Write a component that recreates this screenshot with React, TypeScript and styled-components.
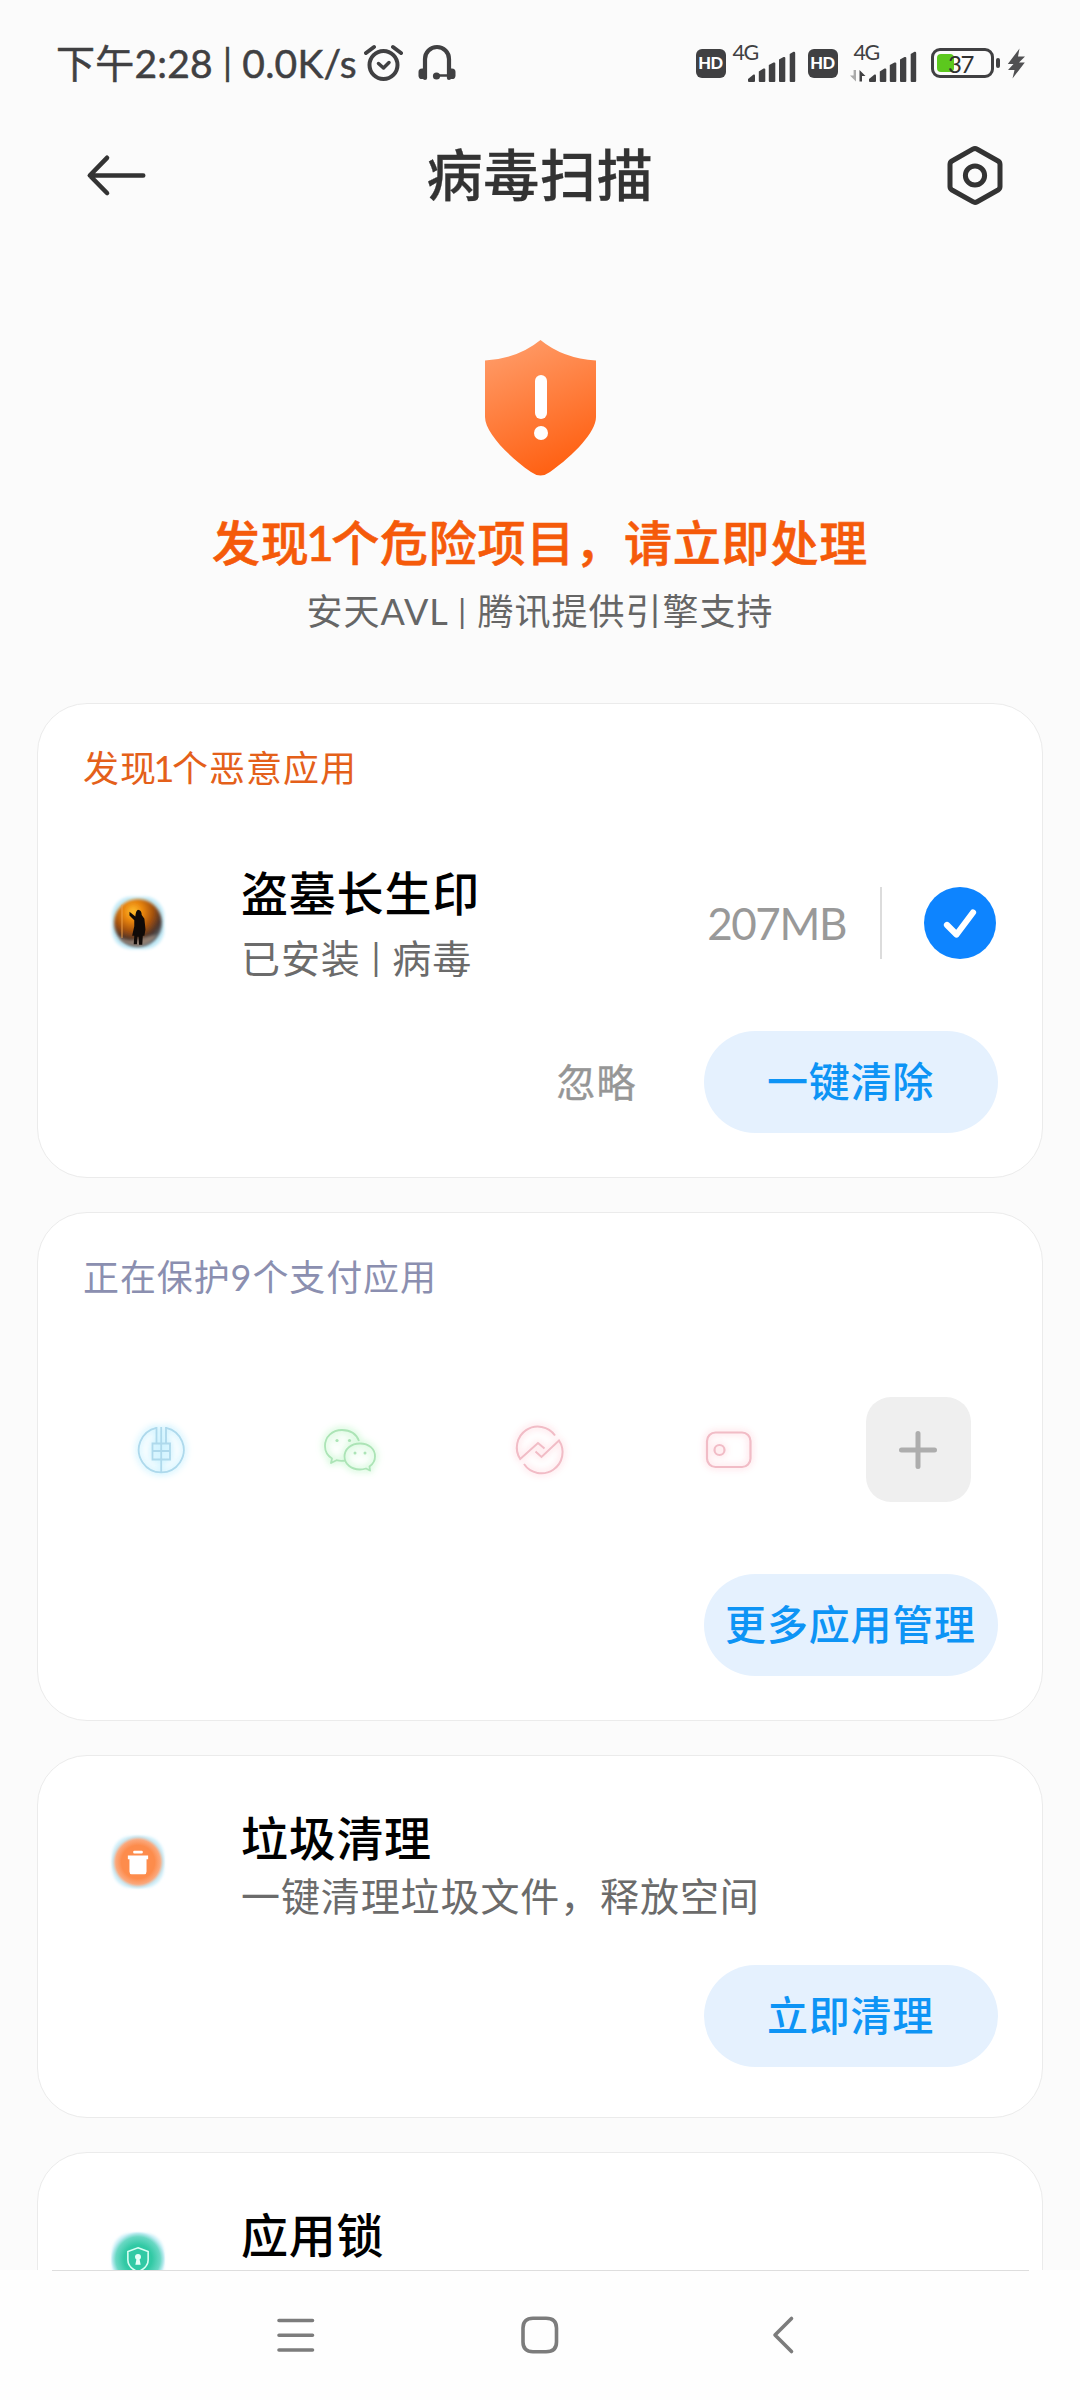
import React from "react";
import styled, { createGlobalStyle } from "styled-components";

const GlobalStyle = createGlobalStyle`
  * { box-sizing: border-box; }
  body { margin: 0; background: #fbfbfb; }
`;

const Screen = styled.div`
  width: 1080px;
  height: 2400px;
  overflow: hidden;
  display: flex;
  flex-direction: column;
  background: #fbfbfb;
  color: #000;
  font-family: Lato, "Noto Sans CJK SC", sans-serif;
`;

const Text = styled.div<{
  $size: number;
  $line: number;
  $color?: string;
  $weight?: number;
  $track?: number;
  $stroke?: number;
}>`
  font-size: ${(p) => p.$size}px;
  line-height: ${(p) => p.$line}px;
  color: ${(p) => p.$color ?? "#000"};
  font-weight: ${(p) => p.$weight ?? 400};
  letter-spacing: ${(p) => p.$track ?? 0}px;
  -webkit-text-stroke: ${(p) => p.$stroke ?? 0}px currentColor;
  white-space: nowrap;
`;

const One = styled.span`
  margin: 0 -3.5px;
`;

/* separator bar, raised to the height of the ideographs */
const Bar = styled.span`
  font-size: 0.92em;
  line-height: 1;
  vertical-align: 0.07em;
`;

/* ---------- status bar ---------- */

const StatusBar = styled.div`
  height: 96px;
  flex: none;
  padding: 30px 54px 0 56px;
  display: flex;
  justify-content: space-between;
  align-items: flex-start;
`;

const StatusGroup = styled.div`
  display: flex;
  align-items: center;
  height: 66px;
`;

const StatusIcons = styled.div<{ $left: number }>`
  display: flex;
  margin-left: ${(p) => p.$left}px;
`;

const HdBadge = styled.div`
  width: 30px;
  height: 29px;
  border-radius: 6px;
  background: #404042;
  color: #fff;
  font-size: 16.5px;
  line-height: 29px;
  font-weight: 900;
  letter-spacing: -0.5px;
  text-align: center;
`;

const Signal = styled.div<{ $width: number; $left: number }>`
  width: ${(p) => p.$width}px;
  margin-left: ${(p) => p.$left}px;
  height: 40px;
  position: relative;
  display: flex;
  justify-content: flex-end;
  align-items: flex-end;
`;

const NetLabel = styled.span<{ $left: number }>`
  position: absolute;
  left: ${(p) => p.$left}px;
  top: -2px;
  font-size: 21.5px;
  line-height: 22px;
  letter-spacing: -1.4px;
  color: #404042;
`;

const Battery = styled.div`
  width: 63px;
  height: 30px;
  margin-left: 14px;
  border: 3px solid #404042;
  border-radius: 9px;
  padding: 3px;
  position: relative;
`;

const BatteryFill = styled.div`
  width: 17px;
  height: 18px;
  border-radius: 4px;
  background: #5cc81e;
`;

const BatteryText = styled.span`
  position: absolute;
  inset: 0;
  text-align: center;
  font-size: 24px;
  line-height: 25px;
  letter-spacing: -1.5px;
  color: #303030;
  padding-right: 3px;
`;

const BatteryNub = styled.div`
  width: 4px;
  height: 10px;
  margin: 0 7px 0 2.5px;
  border-radius: 2px;
  background: #404042;
`;

const AlarmIcon = () => (
  <svg width="40" height="38" viewBox="0 0 40 38" fill="none" stroke="#404042" strokeLinecap="round">
    <circle cx="19.5" cy="21" r="14" strokeWidth="4" />
    <path d="M14.5 19.5 L19.5 24 L25 18.5" strokeWidth="3.5" strokeLinejoin="round" />
    <path d="M2 9 L10 3 M29 3 L37 9" strokeWidth="4" />
  </svg>
);

const HeadsetIcon = () => (
  <svg width="38" height="38" viewBox="0 0 38 38" fill="none" stroke="#404042">
    <path d="M7 34 V15 A12 12 0 0 1 31 15 V34" strokeWidth="4.2" strokeLinecap="round" />
    <path d="M19 31.5 H30" strokeWidth="2.5" />
    <circle cx="18.5" cy="32" r="3.6" fill="#404042" stroke="none" />
    <rect x="0.5" y="24.5" width="8" height="10.5" rx="3.6" fill="#404042" stroke="none" />
    <rect x="29.5" y="24.5" width="8" height="10.5" rx="3.6" fill="#404042" stroke="none" />
  </svg>
);

const SignalBars = () => (
  <svg width="49" height="32" viewBox="0 0 49 32" fill="#404042">
    <path d="M1 28 L6.5 23.5 Q8 23 8 24.5 V30 Q8 31 7 31 H2 Q1 31 1 30Z" />
    <path d="M11.800 20.5 L16.5 17.5 Q18.300 17 18.300 18.5 V30 Q18.300 31 17.300 31 H12.800 Q11.800 31 11.800 30Z" />
    <path d="M21.800 14 L26.5 11.5 Q28.300 11 28.300 12.5 V30 Q28.300 31 27.300 31 H22.800 Q21.800 31 21.800 30Z" />
    <path d="M32 8.5 L36.5 6 Q38.300 5.5 38.300 7 V30 Q38.300 31 37.300 31 H33 Q32 31 32 30Z" />
    <path d="M42.700 3 L46.5 0.8 Q48.200 0.5 48.200 2 V30 Q48.200 31 47.200 31 H43.700 Q42.700 31 42.700 30Z" />
  </svg>
);

const TrafficArrows = () => (
  <svg width="16" height="12" viewBox="0 0 16 12">
    <path d="M3.6 0 H6 V11.5 L0 5.5 H3.6Z" fill="#aaa" />
    <path d="M9.5 0 L15.5 6 H12 V11.5 H9.5Z" fill="#404042" />
  </svg>
);

const TrafficSlot = styled.div`
  display: flex;
  margin: 0 2px 1px 0;
`;

const BoltIcon = () => (
  <svg width="19" height="31" viewBox="0 0 19 31" fill="#505052">
    <path d="M12.5 0.5 L0.8 16 H6.5 L1 22 H7.5 L5.5 30.5 L17.8 14.5 H12 L18 8.5 H11Z" />
  </svg>
);

/* ---------- header ---------- */

const Header = styled.div`
  height: 158px;
  flex: none;
  padding: 0 72px;
  display: grid;
  grid-template-columns: 76px 1fr 76px;
  align-items: center;
  text-align: center;
`;

const BackArrow = () => (
  <svg width="76" height="44" viewBox="0 0 76 44" fill="none" stroke="#333" strokeWidth="4.6" strokeLinecap="round" strokeLinejoin="round">
    <path d="M71.2 22.5 H18 M35 4.8 L17.8 22.5 L35 40" />
  </svg>
);

const SettingsIcon = () => (
  <svg width="76" height="64" viewBox="-12 0 76 64" fill="none" stroke="#333" strokeWidth="5">
    <path d="M28.8 6.2 Q31 5 33.2 6.2 L54 18 Q56 19.2 56 21.5 V43.5 Q56 45.8 54 47 L33.2 58.7 Q31 60 28.8 58.7 L8 47 Q6 45.8 6 43.5 V21.5 Q6 19.2 8 18Z" />
    <circle cx="31" cy="32.5" r="9.6" />
  </svg>
);

/* ---------- hero ---------- */

const Hero = styled.div`
  display: flex;
  flex-direction: column;
  align-items: center;
  padding: 86px 0 67px;
  flex: none;
`;

const HeroLine = styled.div<{ $top: number }>`
  margin-top: ${(p) => p.$top}px;
`;

const Shield = () => (
  <svg width="111" height="136" viewBox="0 0 111 136">
    <defs>
      <linearGradient id="shield" x1="0.2" y1="0" x2="0.55" y2="1">
        <stop offset="0" stopColor="#ff9c69" />
        <stop offset="1" stopColor="#ff6012" />
      </linearGradient>
    </defs>
    <path
      d="M55.5 0 Q78 18.5 111 20.5 V77 C111 92 89 115 65 132 Q55.5 139 46 132 C22 115 0 92 0 77 V20.5 Q33 18.5 55.5 0Z"
      fill="url(#shield)"
    />
    <rect x="50" y="35" width="12" height="44" rx="6" fill="#fff" />
    <circle cx="56" cy="93" r="7" fill="#fff" />
  </svg>
);

/* ---------- cards ---------- */

const Cards = styled.div`
  flex: 1;
  min-height: 0;
  overflow: hidden;
  display: flex;
  flex-direction: column;
  gap: 34px;
  padding: 0 37px;
`;

const Card = styled.section<{ $height: number; $top: number }>`
  height: ${(p) => p.$height}px;
  flex: none;
  padding: ${(p) => p.$top}px 44.5px 0 45px;
  border: 1px solid #ebebeb;
  border-radius: 50px;
  background: #fff;
`;

const ItemRow = styled.div<{ $top?: number }>`
  margin-top: ${(p) => p.$top ?? 0}px;
  display: flex;
  align-items: flex-start;
`;

const IconSlot = styled.div<{ $top: number }>`
  width: 110px;
  margin: ${(p) => p.$top}px 48px 0 0;
  display: flex;
  justify-content: center;
`;

const Info = styled.div<{ $gap: number }>`
  flex: 1;
  display: flex;
  flex-direction: column;
  gap: ${(p) => p.$gap}px;
`;

const SizeArea = styled.div`
  height: 120px;
  display: flex;
  align-items: center;
`;

const Divider = styled.div`
  width: 2px;
  height: 72px;
  margin: 0 42px 0 34px;
  background: #dcdcdc;
`;

const Check = styled.div`
  width: 72px;
  height: 72px;
  margin-right: 1.5px;
  border-radius: 50%;
  background: #0d84ff;
`;

const Actions = styled.div<{ $top: number }>`
  margin-top: ${(p) => p.$top}px;
  display: flex;
  justify-content: flex-end;
  align-items: center;
  gap: 67px;
`;

const PillButton = styled.button`
  width: 294px;
  height: 102px;
  padding: 0;
  border: 0;
  border-radius: 51px;
  background: #e5f1fe;
  color: #0d94f5;
  font-family: inherit;
  font-size: 41px;
  font-weight: 500;
  letter-spacing: 0.8px;
  line-height: 102px;
  white-space: nowrap;
`;

const AppGrid = styled.div`
  margin: 96px -15.5px 0 -16.5px;
  height: 105px;
  display: grid;
  grid-template-columns: repeat(5, 1fr);
  align-items: center;
  justify-items: center;
`;

const AddTile = styled.div`
  width: 105px;
  height: 105px;
  border-radius: 25px;
  background: #efefef;
  display: flex;
  align-items: center;
  justify-content: center;
`;

const GlowSvg = styled.svg<{ $glow: string }>`
  overflow: visible;
  filter: drop-shadow(0 0 3px ${(p) => p.$glow}) drop-shadow(0 0 3px ${(p) => p.$glow});
`;

const BankIcon = () => (
  <GlowSvg $glow="#c8f1ff" width="50" height="50" viewBox="0 0 50 50" fill="none" stroke="#aed9ec" strokeWidth="1.8">
    <path d="M20.5 2.8 A22.5 22.5 0 1 0 30 2.8" />
    <path d="M20.5 2 V18 M25.2 2 V47.5 M30 2 V18 M16.5 18.5 H34 V34.5 H16.5Z M16.5 26 H34" />
  </GlowSvg>
);

const ChatIcon = () => (
  <GlowSvg $glow="#cdf8d4" width="54" height="44" viewBox="0 0 54 44" fill="none" stroke="#ace4b6" strokeWidth="1.8" strokeLinejoin="round">
    <path d="M36 13 C33 5 26 2 19 2 C9 2 2 9 2 18 C2 24 5 28 9 30.5 L8 35 L13.5 32.2 C17 33 19 33 22.5 32.5" />
    <path d="M37 15.5 C28 15.5 21.5 21 21.5 28.5 C21.5 36 28 41.5 37 41.5 C39.5 41.5 41.5 41 43 40.5 L47 42.5 L46.5 38.5 C50 36 52 32.5 52 28.5 C52 21 46 15.5 37 15.5Z" />
    <g fill="#ace4b6" stroke="none">
      <circle cx="14" cy="12.5" r="1.6" />
      <circle cx="26.5" cy="12.5" r="1.6" />
      <circle cx="32" cy="25" r="1.5" />
      <circle cx="42" cy="25" r="1.5" />
    </g>
  </GlowSvg>
);

const FundIcon = () => (
  <GlowSvg $glow="#ffe3e8" width="46" height="46" viewBox="0 0 46 46" fill="none" stroke="#f1bcc6" strokeWidth="2">
    <path d="M38 8.5 A21 21 0 0 0 3.2 32 L21 16 L27.5 21.500" />
    <path d="M7 37 A21 21 0 0 0 42 13.5 L24.5 30 L18.500 24.500" />
  </GlowSvg>
);

const WalletIcon = () => (
  <GlowSvg $glow="#ffe3e8" width="48" height="40" viewBox="0 0 48 40" fill="none" stroke="#f1bcc6" strokeWidth="2.2">
    <rect x="2" y="2.5" width="43.5" height="34.5" rx="8.5" />
    <circle cx="14.5" cy="20" r="5" />
  </GlowSvg>
);

const PlusIcon = () => (
  <svg width="38" height="38" viewBox="0 0 38 38" stroke="#adadad" strokeWidth="5" strokeLinecap="round">
    <path d="M19 2.5 V35.5 M2.5 19 H35.5" />
  </svg>
);

const CheckIcon = () => (
  <svg width="72" height="72" viewBox="0 0 72 72" fill="none" stroke="#fff" strokeWidth="6.200" strokeLinecap="round" strokeLinejoin="round">
    <path d="M23 38 L32.5 47.5 L49 25.5" />
  </svg>
);

const GameIcon = () => (
  <svg width="64" height="64" viewBox="0 0 60 60">
    <defs>
      <radialGradient id="game" cx="0.4" cy="0.26" r="0.72">
        <stop offset="0" stopColor="#ffc02e" />
        <stop offset="0.28" stopColor="#ea850d" />
        <stop offset="0.58" stopColor="#a3500f" />
        <stop offset="0.82" stopColor="#4a342c" />
        <stop offset="1" stopColor="#56626a" />
      </radialGradient>
      <filter id="gameSoft" x="-20%" y="-20%" width="140%" height="140%">
        <feGaussianBlur stdDeviation="1.5" />
      </filter>
    </defs>
    <rect x="5.5" y="5.5" width="49" height="49" rx="18" fill="#c4ebf8" filter="url(#gameSoft)" />
    <circle cx="30" cy="30" r="22.5" fill="url(#game)" filter="url(#gameSoft)" />
    <path d="M15 13 V44" stroke="#f0a24a" strokeWidth="1.5" opacity="0.6" />
    <path d="M11 43 Q20 48 28 45 L48 41 Q42 51 30 52 Q17 51 11 43Z" fill="#a08a7a" opacity="0.8" filter="url(#gameSoft)" />
    <path d="M30 17.5 Q33.5 18 33.5 22.5 L36 26 L37 36 L36 42 H34.5 L34 50.5 H31 L30.5 43 H29.5 L29 50 H26 L26.5 42 H24.5 L26.500 33 L26.5 27.500 L22 23 L22 19.500 L27.5 24 Q28 18 30 17.5Z" fill="#100a08" />
  </svg>
);

const TrashIcon = () => (
  <svg width="64" height="64" viewBox="0 0 60 60">
    <defs>
      <radialGradient id="trash">
        <stop offset="0.6" stopColor="#fd8c4c" />
        <stop offset="0.8" stopColor="#fba87c" />
        <stop offset="0.9" stopColor="#cfe0e4" />
        <stop offset="1" stopColor="#def4fb" stopOpacity="0" />
      </radialGradient>
      <filter id="trashSoft" x="-20%" y="-20%" width="140%" height="140%">
        <feGaussianBlur stdDeviation="1.5" />
      </filter>
    </defs>
    <rect x="6" y="6" width="48" height="48" rx="18" fill="#c9edf9" filter="url(#trashSoft)" />
    <circle cx="30" cy="30" r="26" fill="url(#trash)" />
    <path d="M20.500 24 H39.500 V27.5 H38 V39 Q38 41.500 36 41.500 H24 Q22 41.500 22 39 V27.5 H20.500Z" fill="#fff" />
    <rect x="25.5" y="19.5" width="9" height="2.5" rx="1" fill="#fff" />
  </svg>
);

const LockIcon = () => (
  <svg width="64" height="64" viewBox="0 0 60 60">
    <defs>
      <radialGradient id="lock">
        <stop offset="0.5" stopColor="#31c9a4" />
        <stop offset="0.8" stopColor="#6ad8c4" />
        <stop offset="0.92" stopColor="#b5e9ec" />
        <stop offset="1" stopColor="#d5f3fb" stopOpacity="0" />
      </radialGradient>
      <filter id="lockSoft" x="-20%" y="-20%" width="140%" height="140%">
        <feGaussianBlur stdDeviation="1.5" />
      </filter>
    </defs>
    <rect x="6" y="6" width="48" height="48" rx="18" fill="#c4eef5" filter="url(#lockSoft)" />
    <circle cx="30" cy="30" r="26" fill="url(#lock)" />
    <path d="M30 19.5 L39.500 23 V31 Q39.500 38 30 42 Q20.500 38 20.500 31 V23Z" fill="none" stroke="#d9fff4" strokeWidth="1.5" />
    <circle cx="30" cy="28" r="2.8" fill="#e6fff8" />
    <path d="M29 28 H31 L32.5 35.500 H27.5Z" fill="#e6fff8" />
  </svg>
);

/* ---------- navigation bar ---------- */

const NavBar = styled.nav`
  height: 130px;
  flex: none;
  background: #fefefe;
  display: flex;
  flex-direction: column;
  align-items: center;
`;

const NavLine = styled.div`
  width: 977px;
  height: 1px;
  background: #dedede;
`;

const NavButtons = styled.div`
  width: 732px;
  height: 128px;
  display: grid;
  grid-template-columns: repeat(3, 1fr);
  justify-items: center;
  align-items: center;
`;

const NavIcon = ({ d }: { d: string }) => (
  <svg width="44" height="44" viewBox="0 0 44 44" fill="none" stroke="#7c7c7c" strokeWidth="3.6" strokeLinecap="round" strokeLinejoin="round">
    <path d={d} />
  </svg>
);

const protectedApps = [BankIcon, ChatIcon, FundIcon, WalletIcon];

const navPaths = [
  "M5 7.5 H38.5 M5 22.3 H38.5 M5 37 H38.5",
  "M15 5.3 H28 Q38.5 5.3 38.5 15 V29 Q38.5 38.7 28 38.7 H15 Q5 38.7 5 29 V15 Q5 5.3 15 5.3Z",
  "M29.5 5.5 L13 22 L29.5 38.5",
];

export default function App() {
  return (
    <Screen>
      <GlobalStyle />
      <StatusBar>
        <StatusGroup>
          <Text $size={39} $line={66} $color="#404042" $track={0.2} $stroke={0.5}>
            下午2:28 <Bar>|</Bar> 0.0K/s
          </Text>
          <StatusIcons $left={7}>
            <AlarmIcon />
          </StatusIcons>
          <StatusIcons $left={14}>
            <HeadsetIcon />
          </StatusIcons>
        </StatusGroup>
        <StatusGroup>
          <HdBadge>HD</HdBadge>
          <Signal $width={70} $left={0}>
            <NetLabel $left={7}>4G</NetLabel>
            <SignalBars />
          </Signal>
          <StatusIcons $left={12}>
            <HdBadge>HD</HdBadge>
          </StatusIcons>
          <Signal $width={79} $left={0}>
            <NetLabel $left={16}>4G</NetLabel>
            <TrafficSlot>
              <TrafficArrows />
            </TrafficSlot>
            <SignalBars />
          </Signal>
          <Battery>
            <BatteryFill />
            <BatteryText>37</BatteryText>
          </Battery>
          <BatteryNub />
          <BoltIcon />
        </StatusGroup>
      </StatusBar>

      <Header>
        <BackArrow />
        <Text $size={56} $line={80} $color="#333" $weight={500} $track={0.8} $stroke={0.3}>
          病毒扫描
        </Text>
        <SettingsIcon />
      </Header>

      <Hero>
        <Shield />
        <HeroLine $top={35}>
          <Text $size={48} $line={64} $color="#f55a0a" $weight={500} $track={0.8} $stroke={0.6}>
            发现<One>1</One>个危险项目，请立即处理
          </Text>
        </HeroLine>
        <HeroLine $top={11}>
          <Text $size={36} $line={50} $color="#666" $track={1}>
            安天AVL <Bar>|</Bar> 腾讯提供引擎支持
          </Text>
        </HeroLine>
      </Hero>

      <Cards>
        <Card $height={475} $top={40}>
          <Text $size={36} $line={48} $color="#e4601a" $track={1}>
            发现<One>1</One>个恶意应用
          </Text>
          <ItemRow $top={71}>
            <IconSlot $top={28}>
              <GameIcon />
            </IconSlot>
            <Info $gap={10}>
              <Text $size={47} $line={60} $weight={500} $track={0.8}>
                盗墓长生印
              </Text>
              <Text $size={39} $line={50} $color="#6b6b6b" $track={0.9}>
                已安装 <Bar>|</Bar> 病毒
              </Text>
            </Info>
            <SizeArea>
              <Text $size={44} $line={60} $color="#999" $track={-1.4}>
                207MB
              </Text>
              <Divider />
              <Check>
                <CheckIcon />
              </Check>
            </SizeArea>
          </ItemRow>
          <Actions $top={48}>
            <Text $size={39} $line={60} $color="#969696" $track={1} $stroke={0.4}>
              忽略
            </Text>
            <PillButton>一键清除</PillButton>
          </Actions>
        </Card>

        <Card $height={509} $top={40}>
          <Text $size={36} $line={48} $color="#8b8fb0" $track={0.9}>
            正在保护9个支付应用
          </Text>
          <AppGrid>
            {protectedApps.map((Icon, i) => (
              <Icon key={i} />
            ))}
            <AddTile>
              <PlusIcon />
            </AddTile>
          </AppGrid>
          <Actions $top={72}>
            <PillButton>更多应用管理</PillButton>
          </Actions>
        </Card>

        <Card $height={363} $top={52}>
          <ItemRow>
            <IconSlot $top={22}>
              <TrashIcon />
            </IconSlot>
            <Info $gap={3}>
              <Text $size={47} $line={60} $weight={500} $track={0.7}>
                垃圾清理
              </Text>
              <Text $size={39} $line={50} $color="#6b6b6b" $track={0.9}>
                一键清理垃圾文件，释放空间
              </Text>
            </Info>
          </ItemRow>
          <Actions $top={44}>
            <PillButton>立即清理</PillButton>
          </Actions>
        </Card>

        <Card $height={363} $top={52}>
          <ItemRow>
            <IconSlot $top={22}>
              <LockIcon />
            </IconSlot>
            <Info $gap={3}>
              <Text $size={47} $line={60} $weight={500} $track={0.7}>
                应用锁
              </Text>
            </Info>
          </ItemRow>
        </Card>
      </Cards>

      <NavBar>
        <NavLine />
        <NavButtons>
          {navPaths.map((d) => (
            <NavIcon key={d} d={d} />
          ))}
        </NavButtons>
      </NavBar>
    </Screen>
  );
}
